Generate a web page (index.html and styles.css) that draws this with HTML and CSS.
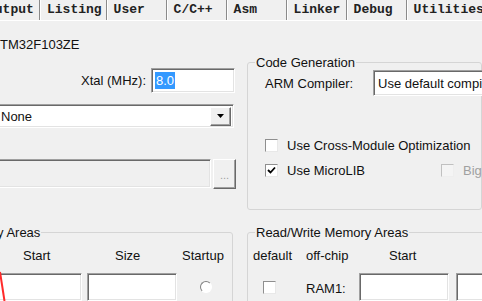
FILE: index.html
```html
<!DOCTYPE html>
<html lang="en">
<head>
    <meta charset="UTF-8">
    <title>Options for Target - Target</title>
    <link rel="stylesheet" href="styles.css">
</head>
<body>
    <div class="tabs">
        <div class="tab tab-first">Output</div>
        <div class="tab">Listing</div>
        <div class="tab">User</div>
        <div class="tab">C/C++</div>
        <div class="tab">Asm</div>
        <div class="tab">Linker</div>
        <div class="tab">Debug</div>
        <div class="tab">Utilities</div>
    </div>

    <div class="page">
        <div class="top">
            <div class="col-left">
                <div class="device">TM32F103ZE</div>
                <div class="xtal-row">
                    <span>Xtal (MHz):</span>
                    <div class="edit xtal"><span class="sel">8.0</span></div>
                </div>
                <div class="edit combo os">
                    <span>None</span>
                    <span class="drop">
                        <svg width="8" height="5" viewBox="0 0 8 5"><path d="M0 0h7L3.5 4z" fill="#000"/></svg>
                    </span>
                </div>
                <div class="path-row">
                    <div class="edit path"></div>
                    <div class="btn-dots">...</div>
                </div>
            </div>

            <fieldset class="group code-gen">
                <legend>Code Generation</legend>
                <div class="arm-row">
                    <span class="arm-label">ARM Compiler:</span>
                    <div class="edit combo compiler"><span>Use default compiler version 5</span></div>
                </div>
                <div class="opt-row first">
                    <div class="opt"><span class="check"></span>Use Cross-Module Optimization</div>
                </div>
                <div class="opt-row second">
                    <div class="opt opt-wide">
                        <span class="check">
                            <svg width="9" height="9" viewBox="0 0 9 9"><path d="M1 4l2.5 2.5L8 1.5" fill="none" stroke="#000" stroke-width="1.8"/></svg>
                        </span>Use MicroLIB
                    </div>
                    <div class="opt off"><span class="check"></span>Big Endian</div>
                </div>
            </fieldset>
        </div>

        <div class="bottom">
            <fieldset class="group ro">
                <legend>y Areas</legend>
                <div class="ro-grid">
                    <div class="hd hd-start">Start</div>
                    <div class="hd hd-size">Size</div>
                    <div class="hd">Startup</div>
                    <div class="edit cell"></div>
                    <div class="edit cell"></div>
                    <div class="radio-cell"><span class="radio"></span></div>
                </div>
            </fieldset>

            <fieldset class="group rw">
                <legend>Read/Write Memory Areas</legend>
                <div class="rw-grid">
                    <div class="hd">default</div>
                    <div class="hd">off-chip</div>
                    <div class="hd hd-rw-start">Start</div>
                    <div class="hd"></div>
                    <div class="check-cell"><span class="check"></span></div>
                    <div class="ram-label">RAM1:</div>
                    <div class="edit cell"></div>
                    <div class="edit cell"></div>
                </div>
            </fieldset>
        </div>
    </div>

    <!-- red annotation stroke from the screenshot -->
    <svg class="mark" width="8" height="31" viewBox="0 0 8 31"><path d="M0 2L4.5 31" stroke="#ff2a2a" stroke-width="2"/></svg>
</body>
</html>
```

FILE: styles.css
```css
body {
    margin: 0;
    background-color: #f0f0f0;
    color: #111;
    font-family: "Liberation Sans", Arial, sans-serif;
    font-size: 13px;
    line-height: 15px;
    overflow: hidden;
    width: 482px;
    height: 301px;
}
.tabs {
    display: flex;
    height: 20px;
    border-bottom: 1px solid #fff;
    white-space: nowrap;
}
.tab {
    box-sizing: border-box;
    min-width: 60px;
    padding: 0 4px 0 6px;
    border-left: 1px solid #fff;
    border-right: 1px solid #8a8a8a;
    font-family: "Liberation Mono", "Courier New", monospace;
    font-weight: bold;
    font-size: 13px;
    line-height: 20px;
    color: #222;
    flex-shrink: 0;
}
.tab-first {
    margin-left: -20px;
}
.page {
    white-space: nowrap;
}
.top {
    display: flex;
    gap: 11px;
}
.col-left {
    width: 236px;
    flex-shrink: 0;
}
.device {
    margin-top: 16px;
}
.edit {
    box-sizing: border-box;
    background-color: #fff;
    border: 1px solid;
    border-color: #a0a0a0 #fff #fff #a0a0a0;
    box-shadow: inset 1px 1px 0 #696969, inset -1px -1px 0 #e3e3e3;
}
.xtal-row {
    display: flex;
    justify-content: flex-end;
    align-items: center;
    gap: 5px;
    margin-top: 16px;
    padding-right: 1px;
}
.xtal {
    width: 84px;
    height: 25px;
    padding: 3px 0 0 3px;
}
.sel {
    display: inline-block;
    background-color: #3399ff;
    color: #fff;
    padding: 1px 1px;
}
.combo {
    display: flex;
    align-items: center;
}
.os {
    margin-top: 11px;
    width: 236px;
    height: 24px;
    margin-left: -2px;
    padding-left: 2px;
    justify-content: space-between;
    padding-right: 2px;
}
.drop {
    box-sizing: border-box;
    width: 21px;
    height: 19px;
    display: flex;
    align-items: center;
    justify-content: center;
    background-color: #f0f0f0;
    border: 1px solid;
    border-color: #fff #696969 #696969 #fff;
    box-shadow: inset -1px -1px 0 #a0a0a0;
}
.path-row {
    display: flex;
    gap: 2px;
    margin-top: 31px;
    margin-left: -4px;
}
.path {
    width: 215px;
    height: 29px;
    background-color: #f0f0f0;
}
.btn-dots {
    box-sizing: border-box;
    width: 23px;
    height: 30px;
    border: 1px solid;
    border-color: #fff #696969 #696969 #fff;
    box-shadow: inset -1px -1px 0 #a0a0a0;
    color: #a0a0a0;
    font-size: 11px;
    text-align: center;
    line-height: 30px;
}
.group {
    margin: 0;
    padding: 0 0 0 7px;
    border: 1px solid #d5d5d5;
    border-radius: 3px;
    min-width: 0;
    box-sizing: border-box;
}
.group legend {
    padding: 0 1px;
    line-height: 15px;
}
.code-gen {
    margin-top: 34px;
    width: 260px;
    padding-bottom: 31px;
}
.arm-row {
    display: flex;
    align-items: center;
    margin-left: 10px;
}
.arm-label {
    width: 108px;
    flex-shrink: 0;
}
.compiler {
    width: 150px;
    height: 26px;
    padding-left: 4px;
    flex-shrink: 0;
}
.opt-row {
    display: flex;
    align-items: center;
    height: 16px;
    margin-left: 10px;
}
.opt-row.first {
    margin-top: 41px;
}
.opt-row.second {
    margin-top: 9px;
}
.opt {
    display: flex;
    align-items: center;
    gap: 9px;
}
.opt-wide {
    width: 176px;
    flex-shrink: 0;
}
.check {
    box-sizing: border-box;
    width: 13px;
    height: 13px;
    background-color: #fff;
    border: 1px solid;
    border-color: #8f8f8f #e8e8e8 #e8e8e8 #8f8f8f;
    display: flex;
    align-items: center;
    justify-content: center;
    flex-shrink: 0;
}
.off {
    color: #a0a0a0;
}
.off .check {
    background-color: #f4f4f4;
    border-color: #c0c0c0 #eee #eee #c0c0c0;
}
.bottom {
    display: flex;
    margin-top: 15px;
}
.ro {
    margin-left: -12px;
    width: 245px;
    flex-shrink: 0;
    height: 90px;
}
.ro-grid {
    display: grid;
    grid-template-columns: 91px 90px 50px;
    column-gap: 5px;
    row-gap: 10px;
    margin-top: 8px;
    margin-left: -5px;
}
.hd {
    height: 15px;
}
.hd-start {
    padding-left: 32px;
}
.hd-size {
    padding-left: 28px;
}
.cell {
    height: 28px;
}
.radio-cell {
    display: flex;
    align-items: center;
    padding-left: 18px;
}
.radio {
    box-sizing: border-box;
    width: 12px;
    height: 12px;
    border-radius: 50%;
    border: 1px solid;
    border-color: #808080 #fff #fff #808080;
    background-color: #fff;
}
.rw {
    margin-left: 14px;
    width: 260px;
    flex-shrink: 0;
    height: 90px;
}
.rw-grid {
    display: grid;
    grid-template-columns: 53px 53px 97px 90px;
    row-gap: 10px;
    margin-top: 8px;
    margin-left: -2px;
}
.hd-rw-start {
    padding-left: 30px;
}
.check-cell {
    display: flex;
    align-items: center;
    padding-left: 10px;
}
.ram-label {
    display: flex;
    align-items: center;
    padding-top: 3px;
}
.rw-grid .cell {
    width: 90px;
}
.mark {
    position: absolute;
    left: 0;
    top: 270px;
}
```
